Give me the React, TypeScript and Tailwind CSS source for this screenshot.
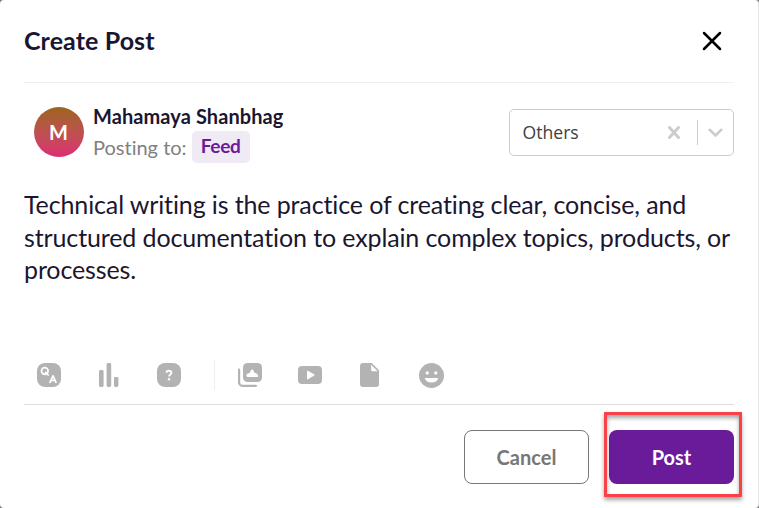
import React from "react";

function QaIcon() {
  return (
    <svg width="24" height="24" viewBox="0 0 24 24" aria-label="Q and A">
      <rect width="24" height="24" rx="8" fill="#b3b3b3" />
      <g fill="none" stroke="#fff" strokeWidth="1.7" strokeLinecap="round" strokeLinejoin="round">
        <circle cx="7.8" cy="8" r="3.3" />
        <path d="M8.5 9.3l2.700 2.700M13 19.300l3-6.500 3 6.500M14 17.500h4" />
      </g>
    </svg>
  );
}

function PollIcon() {
  return (
    <svg width="20" height="24" viewBox="0 0 20 24" fill="#b3b3b3" aria-label="Poll">
      <rect x="0" y="7" width="4.6" height="17" rx="1.4" />
      <rect x="7.6" y="0" width="4.6" height="24" rx="1.4" />
      <rect x="15" y="14" width="4.4" height="10" rx="1.4" />
    </svg>
  );
}

function QuizIcon() {
  return (
    <svg width="24" height="24" viewBox="0 0 24 24" aria-label="Quiz">
      <rect width="24" height="24" rx="8" fill="#b3b3b3" />
      <path d="M9.4 9.8c.1-1.300 1.200-2.100 2.500-2.100 1.400 0 2.500.8 2.500 2.100 0 1.600-2.300 1.800-2.300 3.700" fill="none" stroke="#fff" strokeWidth="1.9" />
      <circle cx="12" cy="16.300" r="1.200" fill="#fff" />
    </svg>
  );
}

function GalleryIcon() {
  return (
    <svg width="24" height="24" viewBox="0 0 24 24" aria-label="Photos">
      <path d="M1.100 6.500v13a3.300 3.300 0 0 0 3.300 3.300H18" fill="none" stroke="#b3b3b3" strokeWidth="2.200" strokeLinecap="round" />
      <rect x="5" y="0" width="19" height="19" rx="4.500" fill="#b3b3b3" />
      <path d="M10 14c-1.800 0-2.100-1.700-1-2.900.8-.9 1.500-1.100 2.300-.8l2-3.400c.5-.9 1.200-.9 1.700 0l1.800 3.200c.9-.4 1.700 0 2.300.9l.8 1.100c.7 1.100.2 1.900-.9 1.900z" fill="#fff" />
    </svg>
  );
}

function VideoIcon() {
  return (
    <svg width="24" height="18" viewBox="0 0 24 18" aria-label="Video">
      <rect width="24" height="18" rx="4" fill="#b3b3b3" />
      <path d="M9 5.300v7.400c0 .5.500.8 1 .5l6.300-3.700a.6.6 0 0 0 0-1L10 4.800c-.5-.3-1 0-1 .5z" fill="#fff" />
    </svg>
  );
}

function FileIcon() {
  return (
    <svg width="19" height="24" viewBox="0 0 19 24" aria-label="File">
      <path d="M3 0h8.700L19 7.200V21a3 3 0 0 1-3 3H3a3 3 0 0 1-3-3V3a3 3 0 0 1 3-3z" fill="#b3b3b3" />
      <path d="M11.100 1.800v5.100c0 .8.600 1.300 1.300 1.300h5.200z" fill="#fff" />
    </svg>
  );
}

function SmileIcon() {
  return (
    <svg width="25" height="25" viewBox="0 0 25 25" aria-label="Emoji">
      <circle cx="12.500" cy="12.500" r="12.500" fill="#b3b3b3" />
      <circle cx="8.200" cy="9.900" r="1.600" fill="#fff" />
      <circle cx="16.800" cy="9.900" r="1.600" fill="#fff" />
      <path d="M5.700 15h13.600a7 6 0 0 1-13.600 0z" fill="#fff" />
    </svg>
  );
}

function CategorySelect() {
  return (
    <div className="mt-[26px] flex h-[47px] w-[225px] items-center rounded-[5px] border border-[#ccc] pl-[12.500px]">
      <span className="-mt-[2px] grow font-['Open_Sans',sans-serif] text-[17.600px] leading-6 text-[#404040]">Others</span>
      <svg width="12" height="14" viewBox="0 0 12 14" className="mr-[17px]" aria-label="Clear">
        <path d="M1.500 1.500l9 10m0-10l-9 10" stroke="#ccc" strokeWidth="3" strokeLinecap="round" />
      </svg>
      <div className="h-[25px] w-px bg-[#ccc]" />
      <svg width="15" height="10" viewBox="0 0 15 10" className="mr-[10px] ml-[10px] mt-px" aria-label="Open">
        <path d="M1.700 1.800l5.800 5.700 5.800-5.700" fill="none" stroke="#ccc" strokeWidth="2.600" strokeLinecap="round" />
      </svg>
    </div>
  );
}

export default function App() {
  return (
    <div className="h-[508px] w-[759px] overflow-hidden bg-[#777]">
      <div className="relative flex h-full flex-col rounded-[4px] border-r border-[#e5e5e5] bg-white pr-6 pl-6 font-['Lato',sans-serif] text-[#1b1630] [font-variant-ligatures:none]">
        <header className="flex h-[83px] shrink-0 items-center justify-between border-b border-[#f0f0f0]">
          <h1 className="-mt-[2px] text-[25px] leading-8 font-bold tracking-[0.1px]">Create Post</h1>
          <svg width="20" height="20" viewBox="0 0 20 20" className="mr-3" aria-label="Close">
            <path d="M2 2l16 16M18 2L2 18" stroke="#000" strokeWidth="2.500" strokeLinecap="round" />
          </svg>
        </header>

        <section className="flex h-[105px] shrink-0 items-start">
          <div className="mt-6 ml-[10px] flex size-[50px] items-center justify-center rounded-full bg-linear-to-b from-[#9c6419] to-[#dc2b72] pr-px text-[20px] font-bold text-white">M</div>
          <div className="mt-[19px] ml-[9px] grow">
            <div className="h-[29px] text-[20px] leading-7 font-bold tracking-[0.08px]">Mahamaya Shanbhag</div>
            <div className="flex items-start">
              <span className="pt-[2px] text-[20px] leading-7 text-[#808080]">Posting to:</span>
              <span className="ml-[5px] h-8 w-[58px] rounded-[5px] bg-[#f0eaf4] text-center text-[19px] leading-[30px] font-bold tracking-[-0.3px] text-[#6a1b9a]">Feed</span>
            </div>
          </div>
          <CategorySelect />
        </section>

        <p className="h-[172px] shrink-0 text-[25px] leading-[32.6px] tracking-[-0.12px] whitespace-nowrap">
          Technical writing is the practice of creating clear, concise, and<br />
          structured documentation to explain complex topics, products, or<br />
          processes.
        </p>

        <div className="flex h-[45px] shrink-0 border-b border-[#dedede] pb-[14px] pl-[13px]">
          <div className="flex h-[30px] items-center">
            <QaIcon />
            <div className="ml-[38px]"><PollIcon /></div>
            <div className="ml-[38px]"><QuizIcon /></div>
            <div className="ml-[33px] h-[30px] w-px bg-[#eee]" />
            <div className="ml-[23px]"><GalleryIcon /></div>
            <div className="ml-[36px]"><VideoIcon /></div>
            <div className="ml-[38px]"><FileIcon /></div>
            <div className="ml-[39.5px]"><SmileIcon /></div>
          </div>
        </div>

        <footer className="flex grow items-start justify-end gap-5 pt-[25px]">
          <button className="h-[54px] w-[125px] rounded-[8px] border border-[#777] text-[20px] font-bold text-[#777]">Cancel</button>
          <div className="relative">
            <button className="h-[54px] w-[125px] rounded-[8px] bg-[#6a1b9a] text-[20px] font-bold text-white">Post</button>
            <div className="pointer-events-none absolute -top-[18px] -left-[5px] h-[85px] w-[138px] border-[3px] border-[#fb4146] shadow-[0_3px_4px_rgba(0,0,0,0.35),inset_0_3px_4px_rgba(0,0,0,0.35)]" />
          </div>
        </footer>
      </div>
    </div>
  );
}
